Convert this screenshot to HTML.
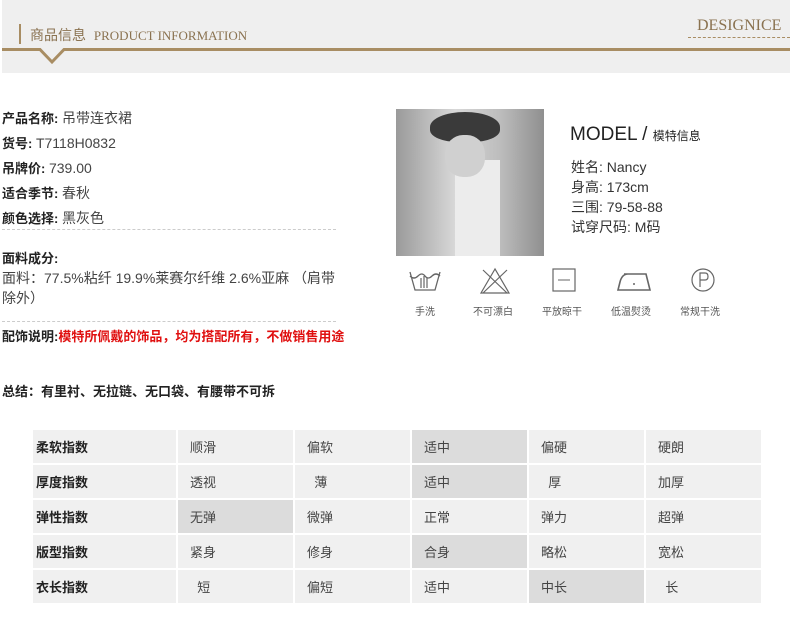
<!DOCTYPE html>
<html><head><meta charset="utf-8"><style>
*{margin:0;padding:0;box-sizing:border-box}
body{width:790px;height:620px;background:#fff;font-family:"Liberation Sans","Noto Sans CJK SC",sans-serif;position:relative;overflow:hidden;color:#333}
.a{position:absolute;white-space:nowrap}
.hd{position:absolute;left:2px;top:0;width:788px;height:73px;background:#efefef}
.l{font-size:13px;color:#333}
.l span{font-size:14px;color:#444}
.l b{color:#222}
table{position:absolute;left:31px;top:428px;border-collapse:collapse}
td{width:117px;height:35px;background:#f0f0f0;border:2px solid #fff;font-size:13px;color:#444;padding-left:12px}
td.h{width:145px;font-weight:bold;color:#222;padding-left:3px}
td.g{background:#dcdcdc}
.ic{position:absolute;top:266px}
.ict{position:absolute;top:303px;font-size:10px;color:#555}
</style></head><body>
<div class="hd"></div>
<div class="a" style="left:19px;top:24px;width:2px;height:20px;background:#a88d63"></div>
<div class="a" style="left:30px;top:25px;font-size:14px;color:#8a7250">商品信息 <span style="font-family:'Liberation Serif',serif;font-size:13px;margin-left:4px">PRODUCT INFORMATION</span></div>
<div class="a" style="left:697px;top:17px;font-family:'Liberation Serif',serif;font-size:16px;color:#8a7250">DESIGNICE</div>
<div class="a" style="left:688px;top:37px;width:102px;border-top:1px dashed #a88d63"></div>
<svg class="a" style="left:0;top:46px" width="790" height="25"><path d="M2 3.5H40L52 16L64 3.5H790" stroke="#a88d63" stroke-width="3" fill="none"/></svg>

<div class="a l" style="left:2px;top:108px"><b>产品名称:</b> <span>吊带连衣裙</span></div>
<div class="a l" style="left:2px;top:133px"><b>货号:</b> <span>T7118H0832</span></div>
<div class="a l" style="left:2px;top:158px"><b>吊牌价:</b> <span>739.00</span></div>
<div class="a l" style="left:2px;top:183px"><b>适合季节:</b> <span>春秋</span></div>
<div class="a l" style="left:2px;top:208px"><b>颜色选择:</b> <span>黑灰色</span></div>
<div class="a" style="left:2px;top:229px;width:334px;border-top:1px dashed #ccc"></div>
<div class="a l" style="left:2px;top:248px"><b>面料成分:</b></div>
<div class="a l" style="left:2px;top:268px"><span>面料：77.5%粘纤 19.9%莱赛尔纤维 2.6%亚麻 （肩带</span></div>
<div class="a l" style="left:2px;top:288px"><span>除外）</span></div>
<div class="a" style="left:2px;top:321px;width:334px;border-top:1px dashed #ccc"></div>
<div class="a l" style="left:2px;top:326px"><b>配饰说明:</b><b style="color:#e01010">模特所佩戴的饰品，均为搭配所有，不做销售用途</b></div>
<div class="a l" style="left:2px;top:381px"><b>总结：有里衬、无拉链、无口袋、有腰带不可拆</b></div>

<div class="a" style="left:396px;top:109px;width:148px;height:147px;background:linear-gradient(90deg,#9a9a9a,#d8d8d8 40%,#bdbdbd 70%,#8f8f8f)"></div>
<div class="a" style="left:455px;top:160px;width:45px;height:96px;background:#ececec"></div>
<div class="a" style="left:430px;top:112px;width:70px;height:30px;border-radius:50% 50% 40% 40%;background:#3a3a3a"></div>
<div class="a" style="left:445px;top:135px;width:40px;height:42px;border-radius:45%;background:#d0d0d0"></div>
<div class="a" style="left:570px;top:124px;font-size:19px;color:#222">MODEL / <span style="font-size:12px">模特信息</span></div>
<div class="a" style="left:571px;top:157px;font-size:14px;color:#333;line-height:20px">姓名: Nancy<br>身高: 173cm<br>三围: 79-58-88<br>试穿尺码: M码</div>

<svg class="ic" style="left:407px" width="36" height="30"><path d="M3 6L8 24H28L33 6M3 10q4 4 8 0t7 0t7 0t8 0" stroke="#666" fill="none" stroke-width="1.3"/><path d="M14 22v-10M17 22v-12M20 22v-10" stroke="#666" stroke-width="1.2"/></svg>
<svg class="ic" style="left:477px" width="36" height="30"><path d="M18 3L4 27H32Z M6 4L30 27M30 4L6 27" stroke="#666" fill="none" stroke-width="1.2"/></svg>
<svg class="ic" style="left:551px" width="26" height="28"><rect x="2" y="3" width="22" height="22" stroke="#666" fill="none" stroke-width="1.2"/><path d="M7 14H19" stroke="#666"/></svg>
<svg class="ic" style="left:614px" width="40" height="28"><path d="M4 24H36L32 8H14Q8 8 6 16Z M10 8H32" stroke="#666" fill="none" stroke-width="1.6"/><circle cx="20" cy="18" r="1" fill="#666"/></svg>
<svg class="ic" style="left:689px" width="28" height="28"><circle cx="14" cy="14" r="11" stroke="#666" fill="none" stroke-width="1.2"/><path d="M11 21V7H16Q19 7 19 10.5T16 14H11" stroke="#666" fill="none" stroke-width="1.2"/></svg>
<div class="ict" style="left:415px">手洗</div>
<div class="ict" style="left:473px">不可漂白</div>
<div class="ict" style="left:542px">平放晾干</div>
<div class="ict" style="left:611px">低温熨烫</div>
<div class="ict" style="left:680px">常规干洗</div>

<table>
<tr><td class="h">柔软指数</td><td>顺滑</td><td>偏软</td><td class="g">适中</td><td>偏硬</td><td>硬朗</td></tr>
<tr><td class="h">厚度指数</td><td>透视</td><td>&nbsp;&nbsp;薄</td><td class="g">适中</td><td>&nbsp;&nbsp;厚</td><td>加厚</td></tr>
<tr><td class="h">弹性指数</td><td class="g">无弹</td><td>微弹</td><td>正常</td><td>弹力</td><td>超弹</td></tr>
<tr><td class="h">版型指数</td><td>紧身</td><td>修身</td><td class="g">合身</td><td>略松</td><td>宽松</td></tr>
<tr><td class="h">衣长指数</td><td>&nbsp;&nbsp;短</td><td>偏短</td><td>适中</td><td class="g">中长</td><td>&nbsp;&nbsp;长</td></tr>
</table>
</body></html>
